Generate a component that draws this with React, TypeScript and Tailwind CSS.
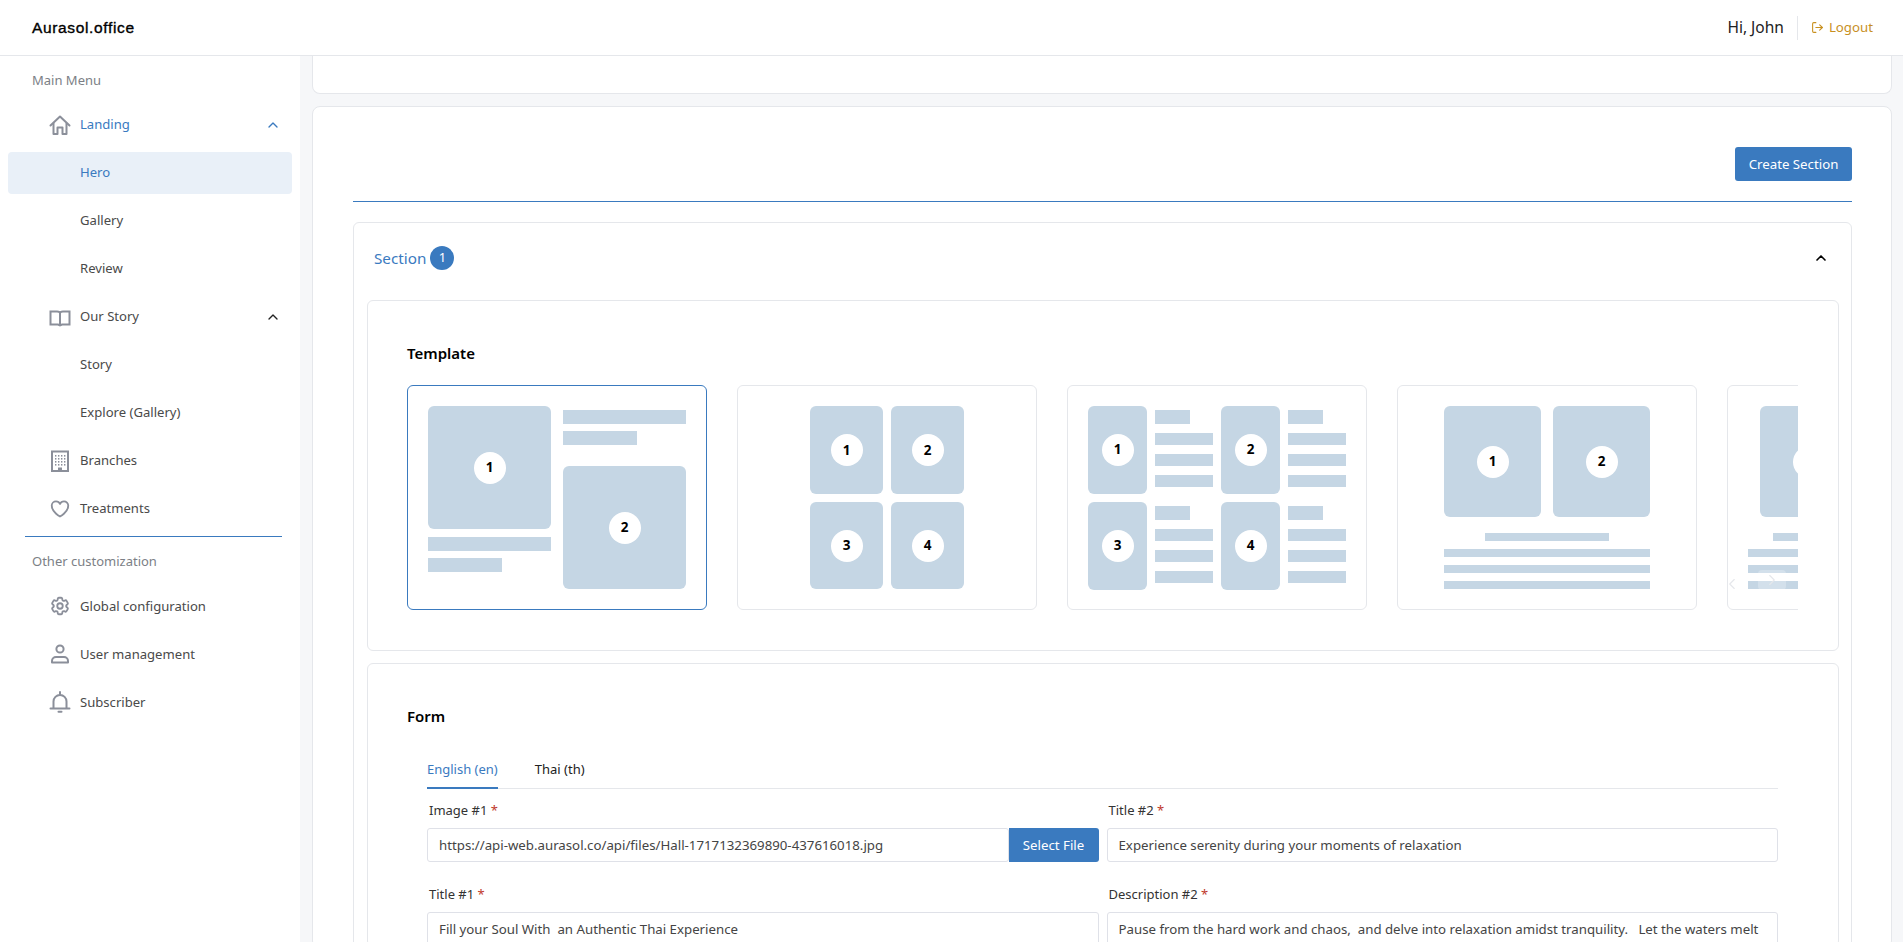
import { ChevronLeft, ChevronRight, ChevronUp, LogOut } from "lucide-react";
import { HiOutlineCog6Tooth, HiOutlineHeart } from "react-icons/hi2";
import type { ReactNode } from "react";

const FONT = "font-['Noto_Sans','Open_Sans',sans-serif]";

function Glyph({ children }: { children: ReactNode }) {
  return (
    <svg
      viewBox="0 0 22 22"
      className="h-[22px] w-[22px]"
      fill="none"
      stroke="currentColor"
      strokeWidth={2}
      strokeLinecap="round"
      strokeLinejoin="round"
    >
      {children}
    </svg>
  );
}

const HomeIcon = () => (
  <Glyph>
    <path d="M1.5 11.5 11 2.5l9.5 9" />
    <path d="M4.5 9v11h4v-6.5h5V20h4V9" strokeLinecap="butt" />
  </Glyph>
);

const BookIcon = () => (
  <Glyph>
    <path
      d="M1.5 5.5H8c1.8 0 3 .6 3 1.8 0-1.2 1.2-1.8 3-1.8h6.5v13H13l-2 1-2-1H1.5zM11 7.5v11.5"
      strokeLinejoin="miter"
    />
  </Glyph>
);

const BuildingIcon = () => (
  <Glyph>
    <rect x="3" y="1.5" width="16" height="19.5" strokeLinejoin="miter" />
    {[5, 8, 11, 14].map((y) =>
      [6, 9, 12, 15].map((x) => (
        <rect key={`${x}-${y}`} x={x} y={y} width="1.4" height="1.6" fill="currentColor" stroke="none" />
      )),
    )}
    <rect x="9" y="17.5" width="4" height="3.5" fill="currentColor" stroke="none" />
  </Glyph>
);

const UserIcon = () => (
  <Glyph>
    <circle cx="11" cy="6" r="3.6" />
    <path d="M3 19.5V18a4 4 0 0 1 4-4h8a4 4 0 0 1 4 4v1.5z" />
  </Glyph>
);

const BellIcon = () => (
  <Glyph>
    <path d="M11 1v2" />
    <path d="M4.5 17v-6.500a6.500 6.500 0 0 1 13 0V17" />
    <path d="M1.500 17.500h19" />
    <path d="M9.500 20.800h3" />
  </Glyph>
);

function NavRow({
  icon,
  label,
  chevron,
  active,
  selected,
}: {
  icon?: ReactNode;
  label: string;
  chevron?: boolean;
  active?: boolean;
  selected?: boolean;
}) {
  return (
    <div
      className={`mx-2 mb-[6px] flex h-[42px] items-center rounded pl-[41px] pr-[11px] text-[13.1px] ${
        selected ? "bg-[#e9f0f8]" : ""
      } ${active || selected ? "text-[#3a7abf]" : "text-[#4a4a4a]"}`}
    >
      <span className="flex w-[31px] shrink-0 items-center text-[#8b8f9a]">{icon}</span>
      <span className="pt-px">{label}</span>
      {chevron ? (
        <ChevronUp
          size={16}
          strokeWidth={2}
          className={`ml-auto ${active ? "text-[#3a7abf]" : "text-[#222]"}`}
        />
      ) : null}
    </div>
  );
}

function Sidebar() {
  return (
    <aside className="w-[300px] shrink-0 bg-white pt-[15px]">
      <p className="mb-[13px] pl-[32px] text-[13px] text-[#7c7f86]">Main Menu</p>
      <NavRow icon={<HomeIcon />} label="Landing" chevron active />
      <NavRow label="Hero" selected />
      <NavRow label="Gallery" />
      <NavRow label="Review" />
      <NavRow icon={<BookIcon />} label="Our Story" chevron />
      <NavRow label="Story" />
      <NavRow label="Explore (Gallery)" />
      <NavRow icon={<BuildingIcon />} label="Branches" />
      <NavRow icon={<HiOutlineHeart className="h-[22px] w-[22px]" strokeWidth={2} />} label="Treatments" />
      <div className="ml-[25px] mr-[18px] border-t border-[#3a7abf]" />
      <p className="mb-[14px] mt-[15px] pl-[32px] text-[13px] text-[#7c7f86]">Other customization</p>
      <NavRow icon={<HiOutlineCog6Tooth className="h-[22px] w-[22px]" strokeWidth={2} />} label="Global configuration" />
      <NavRow icon={<UserIcon />} label="User management" />
      <NavRow icon={<BellIcon />} label="Subscriber" />
    </aside>
  );
}

function Ph({ n, className }: { n?: number; className: string }) {
  return (
    <div className={`flex items-center justify-center rounded-[6px] bg-[#c5d6e4] ${className}`}>
      {n ? (
        <span className="flex h-[32px] w-[32px] items-center justify-center rounded-full bg-white text-[13.5px] font-bold text-black">
          {n}
        </span>
      ) : null}
    </div>
  );
}

function Bar({ className }: { className: string }) {
  return <div className={`bg-[#c5d6e4] ${className}`} />;
}

function TemplateCard({ selected, children }: { selected?: boolean; children: ReactNode }) {
  return (
    <div
      className={`flex h-[225px] w-[300px] shrink-0 items-center justify-center rounded-[6px] border bg-white ${
        selected ? "border-[#3a7abf]" : "border-[#e5e7eb]"
      }`}
    >
      {children}
    </div>
  );
}

function ImageWithLines({ n }: { n: number }) {
  return (
    <div className="flex gap-[8px]">
      <Ph n={n} className="h-[88px] w-[59px]" />
      <div className="flex w-[58px] flex-col pt-[4px]">
        <Bar className="h-[14px] w-[35px]" />
        <Bar className="mt-[9px] h-[12px]" />
        <Bar className="mt-[9px] h-[12px]" />
        <Bar className="mt-[9px] h-[12px]" />
      </div>
    </div>
  );
}

function TemplateRow() {
  return (
    <div className="relative flex w-[1391px] gap-[30px] overflow-hidden">
      <TemplateCard selected>
        <div className="flex gap-[12px]">
          <div className="w-[123px]">
            <Ph n={1} className="h-[123px]" />
            <Bar className="mt-[8px] h-[14px]" />
            <Bar className="mt-[7px] h-[14px] w-[74px]" />
          </div>
          <div className="w-[123px] pt-[4px]">
            <Bar className="h-[14px]" />
            <Bar className="mt-[7px] h-[14px] w-[74px]" />
            <Ph n={2} className="mt-[21px] h-[123px]" />
          </div>
        </div>
      </TemplateCard>
      <TemplateCard>
        <div className="grid grid-cols-[73px_73px] gap-[8px]">
          <Ph n={1} className="h-[88px]" />
          <Ph n={2} className="h-[88px]" />
          <Ph n={3} className="h-[87px]" />
          <Ph n={4} className="h-[87px]" />
        </div>
      </TemplateCard>
      <TemplateCard>
        <div className="grid grid-cols-2 gap-x-[8px] gap-y-[8px]">
          <ImageWithLines n={1} />
          <ImageWithLines n={2} />
          <ImageWithLines n={3} />
          <ImageWithLines n={4} />
        </div>
      </TemplateCard>
      <TemplateCard>
        <div className="w-[206px]">
          <div className="flex gap-[12px]">
            <Ph n={1} className="h-[111px] w-[97px]" />
            <Ph n={2} className="h-[111px] w-[97px]" />
          </div>
          <Bar className="mx-auto mt-[16px] h-[8px] w-[124px]" />
          <Bar className="mt-[8px] h-[8px]" />
          <Bar className="mt-[8px] h-[8px]" />
          <Bar className="mt-[8px] h-[8px]" />
        </div>
      </TemplateCard>
      <div className="h-[225px] w-[300px] shrink-0 rounded-[6px] border border-[#e5e7eb] bg-white pl-[20px] pt-[20px]">
        <div className="ml-[12px] w-[206px]">
          <Ph n={1} className="h-[111px] w-[97px]" />
        </div>
        <Bar className="ml-[25px] mt-[16px] h-[8px] w-[124px]" />
        <Bar className="mt-[8px] h-[8px] w-[206px]" />
        <Bar className="mt-[8px] h-[8px] w-[206px]" />
        <Bar className="mt-[8px] h-[8px] w-[206px]" />
      </div>
      {/* faint carousel arrows over the last card */}
      <ChevronLeft size={18} strokeWidth={1.5} className="absolute left-[1316px] top-[190px] text-[#e5e7eb]" />
      <div className="absolute left-[1351px] top-[185px] flex h-[20px] w-[28px] items-center justify-center rounded bg-white/25">
        <ChevronRight size={18} strokeWidth={1.5} className="text-[#e5e7eb]" />
      </div>
    </div>
  );
}

function Field({ label, children }: { label: string; children: ReactNode }) {
  return (
    <div>
      <p className="mb-[8px] ml-[2px] h-[19px] text-[13px] leading-[19px] text-[#333]">
        {label} <span className="text-[#c0392b]">*</span>
      </p>
      {children}
    </div>
  );
}

function TextBox({ value }: { value: string }) {
  return (
    <div className="flex h-[34px] items-center overflow-hidden whitespace-pre rounded-[3px] border border-[#dfe1e8] bg-white px-[11px] pt-px text-[13.25px] text-[#444]">
      {value}
    </div>
  );
}

export default function App() {
  return (
    <div className={`flex h-[942px] w-[1903px] flex-col overflow-hidden bg-[#f6f7f9] ${FONT}`}>
      <header className="flex h-[56px] shrink-0 items-center justify-between border-b border-[#e5e7eb] bg-white pl-[32px] pr-[30px]">
        <span className="font-['Liberation_Sans',sans-serif] text-[15.5px] tracking-[0.65px] text-black [-webkit-text-stroke:0.35px_black]">
          Aurasol.office
        </span>
        <div className="flex items-center">
          <span className="pt-px text-[15.5px] text-[#222]">Hi, John</span>
          <span className="mx-[13px] h-[24px] border-l border-[#e5e7eb]" />
          <span className="flex items-center gap-[5px] text-[13.25px] text-[#c8901f]">
            <LogOut size={13} strokeWidth={2} />
            Logout
          </span>
        </div>
      </header>
      <div className="flex min-h-0 flex-1">
        <Sidebar />
        <main className="flex-1 pl-[12px] pr-[11px]">
          <div className="h-[38px] rounded-b-[8px] border-x border-b border-[#e5e7eb] bg-white" />
          <section className="mt-[12px] rounded-[8px] border border-[#e5e7eb] bg-white pl-[40px] pr-[39px] pt-[40px]">
            <div className="flex justify-end border-b border-[#3a7abf] pb-[20px]">
              <button className="h-[34px] w-[117px] rounded-[3px] bg-[#3a7abf] pt-px text-[13.25px] text-white">
                Create Section
              </button>
            </div>
            <div className="mt-[20px] rounded-[6px] border border-[#e5e7eb] pl-[13px] pr-[12px]">
              <div className="flex h-[77px] items-center justify-between pb-[7px] pl-[7px] pr-[10px]">
                <div className="flex items-center gap-[4px]">
                  <span className="text-[15.25px] text-[#3a7abf]">Section</span>
                  <span className="flex h-[24px] w-[24px] items-center justify-center rounded-full bg-[#3a7abf] text-[13px] text-white">
                    1
                  </span>
                </div>
                <ChevronUp size={16} strokeWidth={2.5} className="text-black" />
              </div>
              <div className="h-[351px] rounded-[6px] border border-[#e5e7eb] pl-[39px] pt-[42px]">
                <h3 className="mb-[21px] h-[21px] text-[15px] font-semibold leading-[21px] text-black">Template</h3>
                <TemplateRow />
              </div>
              <div className="mt-[12px] rounded-[6px] border border-[#e5e7eb] pl-[39px] pr-[60px] pt-[42px]">
                <h3 className="mb-[25px] h-[21px] text-[15px] font-semibold leading-[21px] text-black">Form</h3>
                <div className="ml-[20px] flex h-[37px] gap-[37px] border-b border-[#e5e7eb] text-[13px]">
                  <span className="-mb-px border-b-2 border-[#3a7abf] pt-[8px] text-[#3a7abf]">English (en)</span>
                  <span className="pt-[8px] text-[#222]">Thai (th)</span>
                </div>
                <div className="ml-[20px] mt-[12px] grid grid-cols-2 gap-x-[8px] gap-y-[23px]">
                  <Field label="Image #1">
                    <div className="flex">
                      <div className="flex-1">
                        <TextBox value="https://api-web.aurasol.co/api/files/Hall-1717132369890-437616018.jpg" />
                      </div>
                      <button className="h-[34px] w-[90px] shrink-0 rounded-r-[3px] bg-[#3a7abf] pt-px text-[13.25px] text-white">
                        Select File
                      </button>
                    </div>
                  </Field>
                  <Field label="Title #2">
                    <TextBox value="Experience serenity during your moments of relaxation" />
                  </Field>
                  <Field label="Title #1">
                    <TextBox value="Fill your Soul With  an Authentic Thai Experience" />
                  </Field>
                  <Field label="Description #2">
                    <TextBox value="Pause from the hard work and chaos,  and delve into relaxation amidst tranquility.   Let the waters melt" />
                  </Field>
                </div>
              </div>
            </div>
          </section>
        </main>
      </div>
    </div>
  );
}
